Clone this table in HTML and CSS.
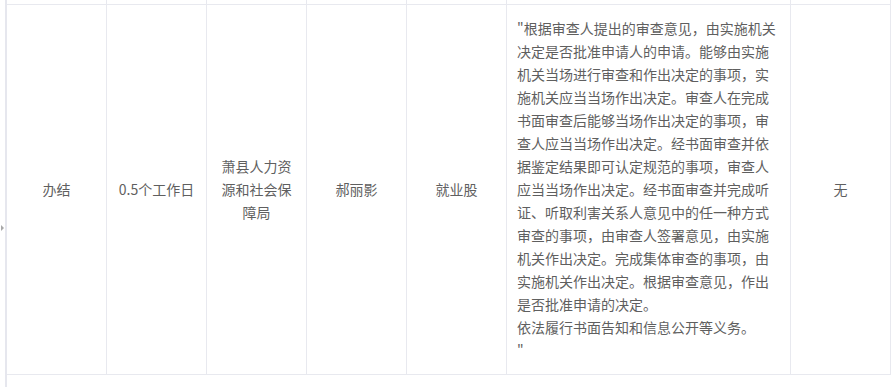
FILE: index.html
```html
<!DOCTYPE html>
<html lang="zh-CN">
<head>
<meta charset="utf-8">
<title>办件信息</title>
<link rel="stylesheet" href="styles.css">
</head>
<body>
<span class="handle"></span>
<div class="pane">
  <table class="grid">
    <colgroup>
      <col class="c-std"><col class="c-std"><col class="c-std"><col class="c-std"><col class="c-std"><col class="c-wide"><col class="c-std">
    </colgroup>
    <tbody>
      <tr class="row-prev">
        <td></td><td></td><td></td><td></td><td></td><td></td><td></td>
      </tr>
      <tr class="row-main">
        <td>办结</td>
        <td>0.5个工作日</td>
        <td>萧县人力资源和社会保障局</td>
        <td>郝丽影</td>
        <td>就业股</td>
        <td class="desc">"根据审查人提出的审查意见，由实施机关决定是否批准申请人的申请。能够由实施机关当场进行审查和作出决定的事项，实施机关应当当场作出决定。审查人在完成书面审查后能够当场作出决定的事项，审查人应当当场作出决定。经书面审查并依据鉴定结果即可认定规范的事项，审查人应当当场作出决定。经书面审查并完成听证、听取利害关系人意见中的任一种方式审查的事项，由审查人签署意见，由实施机关作出决定。完成集体审查的事项，由实施机关作出决定。根据审查意见，作出是否批准申请的决定。<br>依法履行书面告知和信息公开等义务。<br>"</td>
        <td>无</td>
      </tr>
    </tbody>
  </table>
</div>
</body>
</html>
```

FILE: styles.css
```css
html, body {
  margin: 0;
  padding: 0;
  background: #ffffff;
}

body {
  font-family: "Noto Sans CJK SC", "Microsoft YaHei", "Noto Sans", sans-serif;
  font-size: 14px;
  color: #5f5f5f;
  height: 387px;
  overflow: hidden;
  position: relative;
}

.handle {
  position: absolute;
  left: 1px;
  top: 225px;
  width: 0;
  height: 0;
  border-left: 3px solid #a8a8a8;
  border-top: 3px solid transparent;
  border-bottom: 3px solid transparent;
}

.pane {
  margin-left: 5px;
  height: 387px;
  border-left: 2px solid #e6e7ee;
}

.grid {
  table-layout: fixed;
  border-collapse: separate;
  border-spacing: 0;
  width: 884px;
}

.c-std { width: 100px; }
.c-wide { width: 284px; }

.grid td {
  box-sizing: border-box;
  border-right: 1px solid #e8e9ef;
  border-bottom: 1px solid #e8e9ef;
  padding: 12px 10px;
  text-align: center;
  vertical-align: middle;
  line-height: 23px;
  word-break: break-all;
}

.row-prev td {
  height: 5px;
  padding: 0;
  line-height: 0;
}

.grid td.desc {
  text-align: left;
  word-break: normal;
}
```
